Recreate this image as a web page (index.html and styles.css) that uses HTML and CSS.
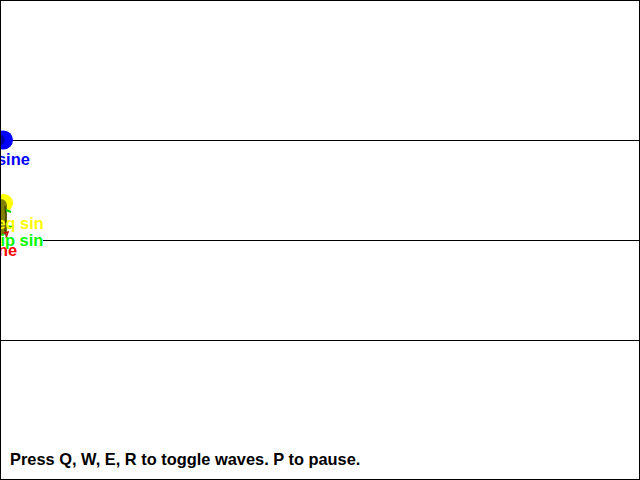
FILE: index.html
```html
<!DOCTYPE html>
<html>
<head>
<meta charset="utf-8">
<link rel="stylesheet" href="styles.css">
</head>
<body>
<div class="stage">
  <svg class="plot" viewBox="1 1 638 440" width="638" height="440">
    <line class="axis" x1="0" y1="140.5" x2="640" y2="140.5"/>
    <line class="axis" x1="43" y1="240.5" x2="640" y2="240.5"/>
    <line class="axis" x1="0" y1="340.5" x2="640" y2="340.5"/>

    <circle cx="3.5" cy="140" r="9.5" fill="#0000ff"/>
    <circle cx="0" cy="140" r="5" fill="#0000a8"/>
    <text class="lbl" x="-3" y="165" fill="#0000ff">sine</text>

    <text class="lbl" x="-53" y="256" fill="#ff0000">Combine</text>

    <circle cx="4" cy="203" r="9" fill="#ffff00"/>
    <path d="M0 199 Q6 199 7 205 L7 222 Q8 230 6 234 L0 236 Z" fill="#808000"/>
    <path d="M5 206 L6 216 L5 228 L6 236" stroke="#3a3a00" stroke-width="1.2" fill="none"/>
    <path d="M6 210 L11 212" stroke="#00cc00" stroke-width="2" fill="none"/>
    <path d="M7 226 L12 227" stroke="#00cc00" stroke-width="2" fill="none"/>
    <path d="M4 233 L8 232 L6 238" stroke="#cc0000" stroke-width="1.5" fill="none"/>

    <text class="lbl" x="-16" y="246" fill="#00ff00">Clip sin</text>
    <text class="lbl" x="-20" y="229" fill="#ffff00">Freq sin</text>
  </svg>
  <p class="help">Press Q, W, E, R to toggle waves. P to pause.</p>
</div>
</body>
</html>
```

FILE: styles.css
```css
html, body {
  margin: 0;
  padding: 0;
  background: #ffffff;
}

.stage {
  width: 640px;
  height: 480px;
  box-sizing: border-box;
  border: 1px solid #000000;
  display: flex;
  flex-direction: column;
  overflow: hidden;
  background: #ffffff;
}

.plot {
  display: block;
  flex: none;
  overflow: hidden;
}

.axis {
  stroke: #000000;
  stroke-width: 1;
}

.lbl {
  font-family: "Liberation Sans", Arial, sans-serif;
  font-weight: bold;
  font-size: 16.4px;
}

.help {
  margin: 0;
  padding: 9px 0 0 9px;
  font-family: "Liberation Sans", Arial, sans-serif;
  font-weight: bold;
  font-size: 16.4px;
  line-height: 18px;
  color: #000000;
}
```
